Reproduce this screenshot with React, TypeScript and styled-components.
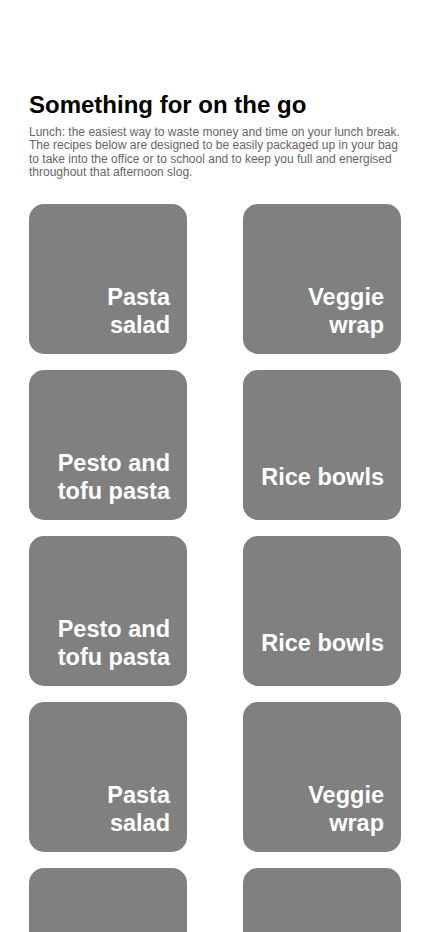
import {FC} from "react"
import styled, {createGlobalStyle} from "styled-components"

const GlobalStyle = createGlobalStyle`
    body {
        margin: 0;
        background: white;
        font-family: "Liberation Sans", Arial, sans-serif;
    }
`

const recipes = [
    "Pasta salad",
    "Veggie wrap",
    "Pesto and tofu pasta",
    "Rice bowls",
    "Pesto and tofu pasta",
    "Rice bowls",
    "Pasta salad",
    "Veggie wrap",
    "Pesto and tofu pasta",
    "Rice bowls",
]

const App: FC = () => {
    return <Page>
        <GlobalStyle/>
        <Header>
            <Title>Something for on the go</Title>
            <Intro>
                Lunch: the easiest way to waste money and time on your lunch break.
                The recipes below are designed to be easily packaged up in your bag
                to take into the office or to school and to keep you full and energised
                throughout that afternoon slog.
            </Intro>
        </Header>

        <Grid>
            {recipes.map((name, i) => (
                <Card key={i}>
                    <Label>{name}</Label>
                </Card>
            ))}
        </Grid>
    </Page>
}

const Page = styled.div`
    padding: 91px 29px 40px;
`

const Header = styled.div`
    margin-bottom: 25px;
`

const Title = styled.h1`
    margin: 0;
    font-size: 24px;
    line-height: 28px;
    font-weight: 700;
    color: #000;
`

const Intro = styled.p`
    margin: 7px 0 0;
    font-size: 12px;
    line-height: 13.3px;
    color: #666;
`

const Grid = styled.div`
    display: grid;
    grid-template-columns: 158px 158px;
    justify-content: space-between;
    row-gap: 16px;
`

const Card = styled.div`
    height: 150px;
    border-radius: 15px;
    background: #808080;
    display: flex;
    flex-direction: column;
    justify-content: flex-end;
    align-items: flex-end;
    padding: 0 17px 15px;
    box-sizing: border-box;
`

const Label = styled.div`
    min-height: 56px;
    display: flex;
    align-items: center;
    justify-content: flex-end;
    text-align: right;
    color: white;
    font-size: 23.5px;
    line-height: 28px;
    font-weight: 700;
`

export default App
